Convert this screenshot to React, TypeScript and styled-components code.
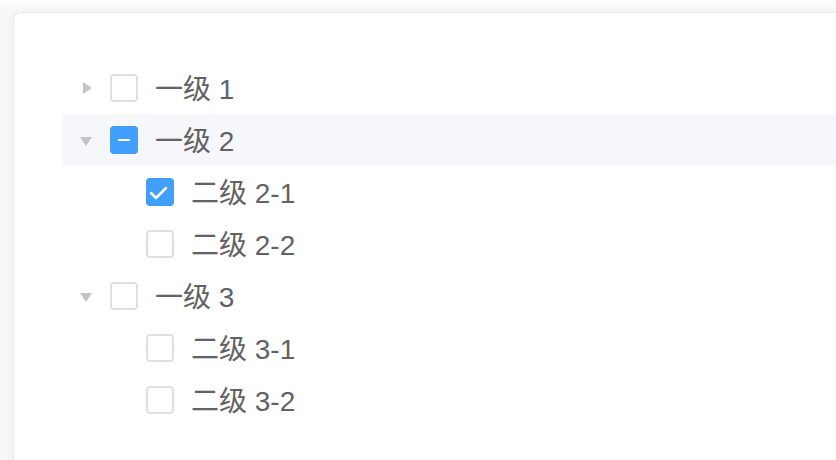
import React, {useState} from 'react';
import styled, {createGlobalStyle} from 'styled-components';

const GlobalStyle = createGlobalStyle`
  html, body {
    margin: 0;
    padding: 0;
    background: #f7f8fa;
    overflow: hidden;
  }
  body {
    font-family: "Liberation Sans", "Noto Sans CJK SC", sans-serif;
  }
`;

const Page = styled.div`
  display: flex;
  width: 836px;
  height: 460px;
  padding: 12px 0 0 13px;
  box-sizing: border-box;
  overflow: hidden;
  background: linear-gradient(#fdfdfe, #f6f7f9 12px);
`;

const Card = styled.div`
  flex: 1;
  box-sizing: border-box;
  padding: 49px 0 0 48px;
  background: #fff;
  border: 1px solid #e6e8ec;
  border-right: none;
  border-bottom: none;
  border-radius: 8px 0 0 0;
  box-shadow: 0 0 8px rgba(0, 0, 0, 0.04);
`;

const Tree = styled.div`
  display: flex;
  flex-direction: column;
`;

const Row = styled.div<{$active: boolean; $level: number}>`
  display: flex;
  align-items: center;
  height: 52px;
  padding-left: ${(p) => p.$level * 36}px;
  background: ${(p) => (p.$active ? '#f5f7fa' : 'transparent')};
  cursor: pointer;
`;

const Caret = styled.span<{$open: boolean; $leaf: boolean}>`
  display: flex;
  align-items: center;
  justify-content: center;
  width: 24px;
  height: 24px;
  margin: 0 12px;
  transform: rotate(${(p) => (p.$open ? 90 : 0)}deg);
  visibility: ${(p) => (p.$leaf ? 'hidden' : 'visible')};

  &::before {
    content: '';
    width: 0;
    height: 0;
    border-left: 9px solid #c0c4cc;
    border-top: 6px solid transparent;
    border-bottom: 6px solid transparent;
    margin-left: 2px;
  }
`;

const Box = styled.span<{$filled: boolean}>`
  display: flex;
  align-items: center;
  justify-content: center;
  width: 28px;
  height: 28px;
  box-sizing: border-box;
  border-radius: 4px;
  border: 2px solid ${(p) => (p.$filled ? '#409eff' : '#dcdfe6')};
  background: ${(p) => (p.$filled ? '#409eff' : '#fff')};
`;

const Dash = styled.span`
  width: 12px;
  height: 2.5px;
  background: #fff;
`;

const Label = styled.span`
  margin-left: 17px;
  padding-top: 3px;
  font-size: 28px;
  color: #606266;
  line-height: 1;
  white-space: nowrap;
`;

type Node = {id: string; label: string; children?: Node[]};

const data: Node[] = [
  {id: '1', label: '一级 1', children: [{id: '1-1', label: '二级 1-1'}]},
  {
    id: '2',
    label: '一级 2',
    children: [
      {id: '2-1', label: '二级 2-1'},
      {id: '2-2', label: '二级 2-2'},
    ],
  },
  {
    id: '3',
    label: '一级 3',
    children: [
      {id: '3-1', label: '二级 3-1'},
      {id: '3-2', label: '二级 3-2'},
    ],
  },
];

const Check = () => (
  <svg width="24" height="24" viewBox="0 0 24 24">
    <polyline
      points="3,13 8,18 18,8"
      fill="none"
      stroke="#fff"
      strokeWidth="2.5"
      strokeLinecap="round"
      strokeLinejoin="round"
    />
  </svg>
);

const App = () => {
  const [open, setOpen] = useState<Record<string, boolean>>({'2': true, '3': true});
  const [checked, setChecked] = useState<Record<string, boolean>>({'2-1': true});

  const stateOf = (n: Node): 'on' | 'off' | 'half' => {
    if (!n.children) return checked[n.id] ? 'on' : 'off';
    const s = n.children.map(stateOf);
    if (s.every((x) => x === 'on')) return 'on';
    if (s.some((x) => x !== 'off')) return 'half';
    return 'off';
  };

  const setAll = (n: Node, v: boolean, acc: Record<string, boolean>) => {
    if (n.children) n.children.forEach((c) => setAll(c, v, acc));
    else acc[n.id] = v;
  };

  const toggleCheck = (n: Node) => {
    const next = {...checked};
    setAll(n, stateOf(n) !== 'on', next);
    setChecked(next);
  };

  const renderNode = (n: Node, level: number): React.ReactNode => {
    const st = stateOf(n);
    const isOpen = !!open[n.id];
    return (
      <React.Fragment key={n.id}>
        <Row
          $active={n.id === '2'}
          $level={level}
          onClick={() => n.children && setOpen({...open, [n.id]: !isOpen})}
        >
          <Caret $open={isOpen} $leaf={!n.children} />
          <Box
            $filled={st !== 'off'}
            onClick={(e) => {
              e.stopPropagation();
              toggleCheck(n);
            }}
          >
            {st === 'on' && <Check />}
            {st === 'half' && <Dash />}
          </Box>
          <Label>{n.label}</Label>
        </Row>
        {n.children && isOpen && n.children.map((c) => renderNode(c, level + 1))}
      </React.Fragment>
    );
  };

  return (
    <Page>
      <GlobalStyle />
      <Card>
        <Tree>{data.map((n) => renderNode(n, 0))}</Tree>
      </Card>
    </Page>
  );
};

export default App;
